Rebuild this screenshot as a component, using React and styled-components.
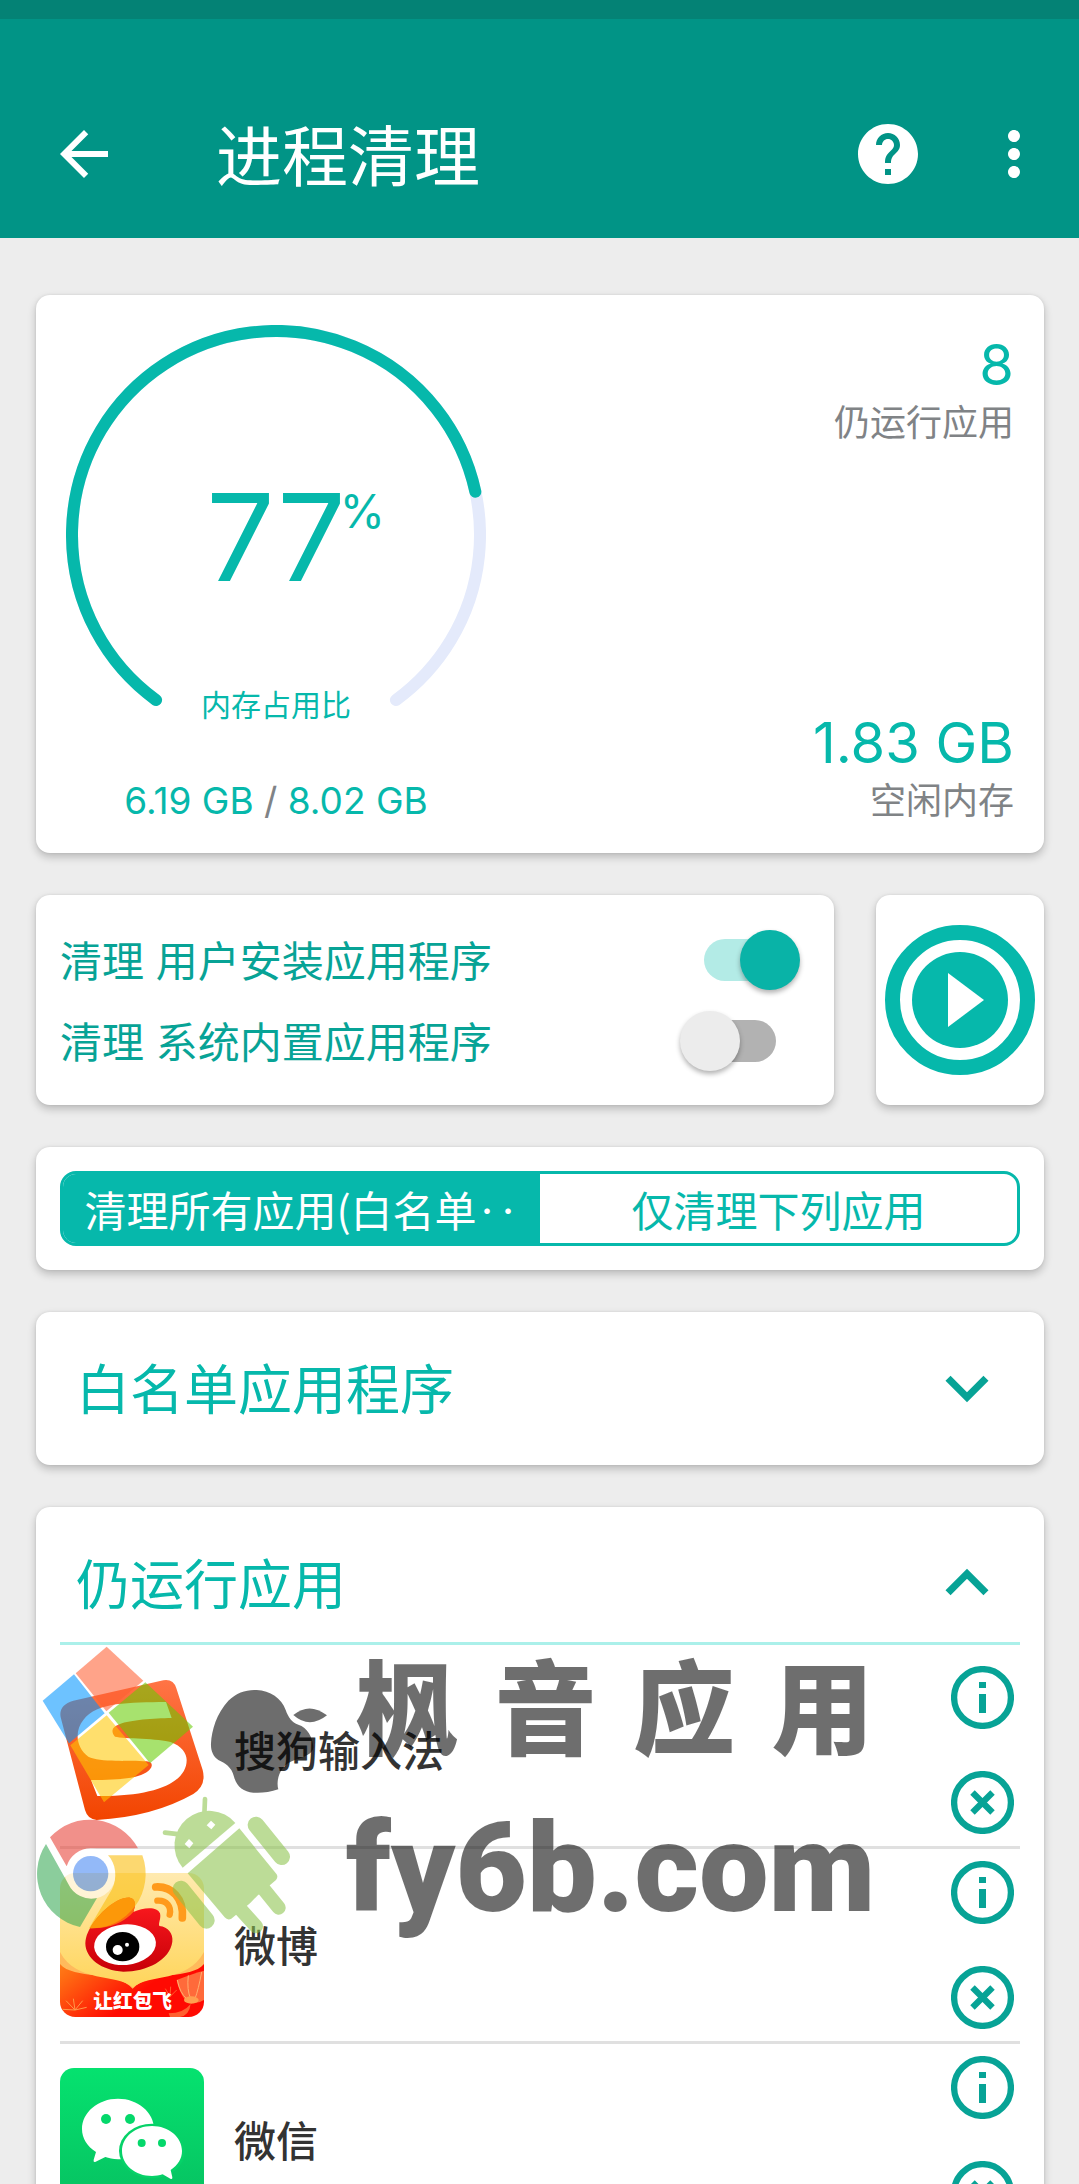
import React, { useState } from "react";
import styled, { createGlobalStyle, css } from "styled-components";
import { MdArrowBack, MdExpandLess, MdExpandMore, MdHelp, MdMoreVert } from "react-icons/md";

const color = {
  bar: "#019486",
  status: "#048275",
  page: "#ededed",
  accent: "#06b8ab",
  deep: "#07a396",
  muted: "#808386",
  line: "#e0e0e0",
};

const GlobalStyle = createGlobalStyle`
  *, *::before, *::after { box-sizing: border-box; }
  body {
    margin: 0;
    background: ${color.page};
    font-family: Inter, "Noto Sans CJK SC", sans-serif;
  }
  button { font: inherit; color: inherit; border: 0; padding: 0; background: none; cursor: pointer; }
  svg { display: block; }
`;

const Shell = styled.div`
  display: flex;
  flex-direction: column;
  height: 100vh;
  overflow: hidden;
`;

const StatusBar = styled.div`
  flex: none;
  height: 19px;
  background: ${color.status};
`;

const AppBar = styled.header`
  flex: none;
  display: flex;
  align-items: center;
  height: 219px;
  padding: 51px 29px 0 48px;
  background: ${color.bar};
  color: #fff;
`;

const BarTitle = styled.h1`
  flex: 1;
  margin: 0 0 0 96px;
  padding-top: 6px;
  font-size: 66px;
  line-height: 72px;
  font-weight: 400;
`;

const IconButton = styled.button`
  display: flex;
  width: 72px;
  height: 72px;
  margin-left: ${(p) => p.$gap || 0}px;
`;

const Scroller = styled.main`
  flex: 1;
  min-height: 0;
  overflow-y: auto;
  scrollbar-width: none;
  padding: 57px 35px 42px 36px;
`;

const Stack = styled.div`
  display: flex;
  flex-direction: column;
  gap: 42px;
`;

const Card = styled.section`
  background: #fff;
  border-radius: 14px;
  box-shadow: 0 4px 9px rgba(0, 0, 0, 0.22), 0 0 3px rgba(0, 0, 0, 0.08);
`;

const MemoryCard = styled(Card)`
  display: flex;
  justify-content: space-between;
  padding: 30px;
`;

const GaugeColumn = styled.div`
  display: flex;
  flex-direction: column;
  gap: 34px;
  align-items: center;
`;

const Gauge = styled.div`
  display: grid;
  width: 420px;
  height: 420px;
  color: ${color.accent};
  > * { grid-area: 1 / 1; }
`;

const GaugeValue = styled.div`
  place-self: center;
  position: relative;
  padding-top: 4px;
  font-size: 121px;
  line-height: 122px;
  font-weight: 400;
`;

const Percent = styled.span`
  position: absolute;
  left: 100%;
  top: 16px;
  margin-left: -6px;
  font-size: 46px;
  line-height: 46px;
`;

const GaugeLabel = styled.div`
  align-self: end;
  justify-self: center;
  padding-bottom: 18px;
  font-size: 30px;
  line-height: 44px;
`;

const MemoryUse = styled.div`
  font-size: 37px;
  line-height: 44px;
  color: ${color.accent};
  span { color: ${color.muted}; }
`;

const StatColumn = styled.div`
  display: flex;
  flex-direction: column;
  justify-content: space-between;
  padding-top: 4px;
  text-align: right;
`;

const StatValue = styled.div`
  font-size: 56px;
  line-height: 72px;
  color: ${color.accent};
`;

const StatLabel = styled.div`
  font-size: 36px;
  line-height: 44px;
  color: ${color.muted};
`;

const SplitRow = styled.div`
  display: flex;
  gap: 42px;
`;

const SwitchCard = styled(Card)`
  flex: 1;
  display: flex;
  flex-direction: column;
  padding: 24px 34px 24px 24px;
`;

const SwitchRow = styled.label`
  display: flex;
  align-items: center;
  justify-content: space-between;
  height: 81px;
  font-size: 42px;
  color: ${color.deep};
  span { padding-bottom: 3px; }
`;

const Switch = styled.input`
  appearance: none;
  position: relative;
  width: 120px;
  height: 60px;
  margin: 0;
  &::before {
    content: "";
    position: absolute;
    inset: 9px 24px;
    border-radius: 21px;
    background: ${(p) => (p.checked ? "#b3ebe6" : "#b2b2b2")};
  }
  &::after {
    content: "";
    position: absolute;
    top: 0;
    left: ${(p) => (p.checked ? "60px" : "0")};
    width: 60px;
    height: 60px;
    border-radius: 50%;
    background: ${(p) => (p.checked ? "#09b3a7" : "#ececec")};
    box-shadow: 0 3px 5px rgba(0, 0, 0, 0.3);
  }
`;

const PlayCard = styled(Card)`
  display: flex;
  align-items: center;
  justify-content: center;
  width: 168px;
`;

const SegmentCard = styled(Card)`
  padding: 24px;
`;

const Segments = styled.div`
  display: flex;
  height: 75px;
  border: 3px solid ${color.accent};
  border-radius: 16px;
  overflow: hidden;
`;

const Segment = styled.button`
  flex: 1 1 0;
  font-family: "Noto Sans CJK SC", sans-serif;
  font-size: 42px;
  line-height: 69px;
  white-space: nowrap;
  color: ${color.accent};
  ${(p) =>
    p.$active &&
    css`
      background: ${color.accent};
      color: #fff;
    `}
`;

const GroupCard = styled(Card)`
  padding: 18px 24px;
`;

const GroupHeader = styled.button`
  display: flex;
  align-items: center;
  justify-content: space-between;
  width: 100%;
  height: 117px;
  padding: 0 10px 2px 16px;
  font-size: 54px;
  color: ${color.accent};
  span { padding-bottom: 3px; }
  svg { width: 86px; height: 86px; color: ${color.deep}; }
`;

const ListBody = styled.div`
  position: relative;
  padding-top: 9px;
  border-top: 3px solid #abf0ea;
`;

const AppList = styled.ul`
  list-style: none;
  margin: 0;
  padding: 0;
`;

const AppRow = styled.li`
  display: flex;
  align-items: center;
  height: 192px;
  padding-right: 6px;
  & + & {
    height: 195px;
    border-top: 3px solid ${color.line};
  }
`;

const AppName = styled.span`
  flex: 1;
  margin-left: 30px;
  padding-bottom: 3px;
  font-size: 42px;
  font-weight: 500;
  color: #333;
`;

const Actions = styled.div`
  display: flex;
  flex-direction: column;
  gap: 42px;
  color: ${color.deep};
  button { display: block; }
`;

const Overlay = styled.div`
  position: absolute;
  top: 1px;
  left: -24px;
  display: flex;
  pointer-events: none;
`;

const OverlayText = styled.div`
  margin-left: 18px;
  color: rgba(0, 0, 0, 0.57);
  font-weight: 900;
`;

const OverlayTitle = styled.div`
  display: flex;
  justify-content: space-between;
  padding: 0 2px 0 10px;
  font-family: "Noto Sans CJK SC", sans-serif;
  font-size: 102px;
  line-height: 114px;
`;

const OverlayUrl = styled.div`
  padding-top: 34px;
  font-family: Roboto, sans-serif;
  font-size: 124px;
  line-height: 150px;
`;

const RADIUS = 204;
const START = 126;
const SWEEP = 288;

function point(deg) {
  const a = (deg * Math.PI) / 180;
  return `${210 + RADIUS * Math.cos(a)} ${210 + RADIUS * Math.sin(a)}`;
}

function arc(from, to) {
  return `M${point(from)}A${RADIUS} ${RADIUS} 0 ${to - from > 180 ? 1 : 0} 1 ${point(to)}`;
}

function GaugeArc({ percent }) {
  return (
    <svg width="420" height="420" viewBox="0 0 420 420" fill="none" strokeWidth="12" strokeLinecap="round">
      <path d={arc(START, START + SWEEP)} stroke="#e4eafb" />
      <path d={arc(START, START + (SWEEP * percent) / 100)} stroke={color.accent} />
    </svg>
  );
}

function PlayIcon() {
  return (
    <svg width="150" height="150" viewBox="-75 -75 150 150">
      <circle r="67.5" fill="none" stroke={color.accent} strokeWidth="15" />
      <circle r="48" fill={color.accent} />
      <path d="M-12-27 24 0-12 27Z" fill="#fff" />
    </svg>
  );
}

function InfoIcon() {
  return (
    <svg width="63" height="63" viewBox="0 0 63 63" fill="currentColor">
      <circle cx="31.5" cy="31.5" r="28.4" fill="none" stroke="currentColor" strokeWidth="6.3" />
      <path d="M28 16h7v6h-7zM28 28h7v19h-7z" />
    </svg>
  );
}

function CloseIcon() {
  return (
    <svg width="63" height="63" viewBox="0 0 63 63" fill="none" stroke="currentColor" strokeWidth="6.3">
      <circle cx="31.5" cy="31.5" r="28.4" />
      <path d="M21.500 21.500l20 20M41.500 21.500l-20 20" />
    </svg>
  );
}

function SogouIcon() {
  return (
    <svg width="144" height="144" viewBox="120 144 432 432">
      <defs>
        <linearGradient id="sogou" x1="0" y1="0" x2="0" y2="1">
          <stop offset="0" stopColor="#ff7446" />
          <stop offset="1" stopColor="#f24400" />
        </linearGradient>
      </defs>
      <path
        fill="url(#sogou)"
        d="M160 212 L430 151 Q460 146 469 175 L548 420 Q560 466 520 492 Q400 560 230 570 Q203 568 195 540 L122 262 Q115 225 160 212Z"
      />
      <path
        fill="#fff"
        d="M438 216 L455 264 C400 265 330 270 300 282 C275 290 272 306 285 320 C310 326 420 325 452 336 C485 348 500 370 500 390 C500 460 400 500 232 498 L213 450 C310 450 375 445 394 412 Q400 396 380 394 C330 390 240 398 205 380 C165 350 165 300 190 270 C230 215 330 218 438 216Z"
      />
    </svg>
  );
}

function WeiboIcon() {
  return (
    <svg width="144" height="144" viewBox="120 729 432 432">
      <defs>
        <clipPath id="weiboClip">
          <rect x="120" y="729" width="432" height="432" rx="46" />
        </clipPath>
        <linearGradient id="weiboRed" x1="0" y1="0" x2="0.7" y2="0.4">
          <stop offset="0" stopColor="#ff8a1c" />
          <stop offset="0.3" stopColor="#ff6a12" />
          <stop offset="1" stopColor="#ff0a02" />
        </linearGradient>
        <linearGradient id="weiboGold" x1="0" y1="0" x2="0" y2="1">
          <stop offset="0" stopColor="#ffeab0" />
          <stop offset="1" stopColor="#ffd55a" />
        </linearGradient>
        <linearGradient id="weiboBody" x1="0" y1="0" x2="0" y2="1">
          <stop offset="0" stopColor="#ff1b20" />
          <stop offset="1" stopColor="#c80008" />
        </linearGradient>
      </defs>
      <g clipPath="url(#weiboClip)">
        <rect x="120" y="960" width="432" height="201" fill="url(#weiboRed)" />
        <path fill="#ffba5c" d="M120 900V1002C160 1050 290 1020 338 1076C390 1020 512 1050 552 1002V900Z" />
        <path fill="url(#weiboGold)" d="M120 729H552V966C500 1060 390 1030 339 1072C290 1030 170 1060 120 966Z" />
        <g fill="none" stroke="#ff9a4a" strokeWidth="3">
          <path d="M165 1140L138 1112M165 1140L160 1106M165 1140L188 1112M165 1140L200 1132M165 1140L128 1138" />
          <path d="M450 1100L436 1076M450 1100L452 1070M450 1100L470 1080" opacity="0.6" />
        </g>
        <path fill="#ff6a3a" d="M470 1050Q520 1030 552 1022V1110Q520 1130 495 1110Q475 1080 470 1050Z" />
        <path fill="none" stroke="#ffb070" strokeWidth="3" d="M472 1050Q480 1090 500 1106M505 1036Q500 1080 512 1106M545 1026Q535 1080 525 1106" />
        <ellipse cx="514" cy="1110" rx="22" ry="11" fill="#ffa050" />
        <path fill="#ff6030" d="M446 1150Q490 1150 512 1122Q508 1156 480 1161H450Z" />
      </g>
      <path
        fill="url(#weiboBody)"
        d="M210 895C235 850 290 800 330 803C350 808 346 828 340 846C370 832 412 828 420 850C424 866 414 880 418 888C445 890 460 912 457 935C450 990 380 1025 310 1025C245 1022 196 985 196 940C197 920 203 908 210 895Z"
      />
      <path fill="#ff6a10" d="M210 895C235 850 290 800 330 803C350 808 346 828 340 846C320 868 290 888 240 894Z" />
      <ellipse cx="315" cy="944" rx="93" ry="61" fill="#fff" transform="rotate(-5 315 944)" />
      <ellipse cx="308" cy="950" rx="50" ry="44" />
      <circle cx="293" cy="960" r="15" fill="#fff" />
      <circle cx="321" cy="944" r="6" fill="#fff" />
      <g fill="none" stroke="#ff9a1c" strokeWidth="23" strokeLinecap="round">
        <path d="M407 771C455 768 492 805 487 864" />
        <path d="M412 812C440 810 455 830 449 854" strokeWidth="19" />
      </g>
      <text
        x="338"
        y="1134"
        textAnchor="middle"
        fontFamily='"Noto Sans CJK SC", sans-serif'
        fontWeight="900"
        fontSize="59"
        fill="#fff"
      >
        让红包飞
      </text>
    </svg>
  );
}

function WechatIcon() {
  return (
    <svg width="144" height="144" viewBox="120 264 432 432">
      <defs>
        <linearGradient id="wechat" x1="0" y1="0" x2="0" y2="1">
          <stop offset="0" stopColor="#05e26f" />
          <stop offset="1" stopColor="#07bf60" />
        </linearGradient>
      </defs>
      <rect x="120" y="264" width="432" height="432" rx="42" fill="url(#wechat)" />
      <path
        fill="#fff"
        d="M294 356C354 356 402 397 402 447C402 497 354 538 294 538C279 538 266 534 256 531L227 545Q219 548 221 539L228 516C202 500 186 475 186 447C186 397 234 356 294 356Z"
      />
      <ellipse cx="396" cy="513" rx="99" ry="82" fill="#06d268" />
      <path
        fill="#fff"
        d="M396 438C446 438 486 471 486 513C486 536 474 555 452 570L457 592Q458 599 451 596L428 583C418 586 407 588 396 588C346 588 306 555 306 513C306 471 346 438 396 438Z"
      />
      <g fill="#05d86b">
        <circle cx="258" cy="417" r="15" />
        <circle cx="330" cy="417" r="15" />
        <circle cx="365" cy="489" r="12" />
        <circle cx="426" cy="489" r="12" />
      </g>
    </svg>
  );
}

function Emblems() {
  return (
    <svg width="292" height="288" viewBox="48 48 876 864" opacity="0.57">
      <path fill="#ff5f31" d="M260 50 370 152 259 244 167 130Z" />
      <path fill="#0095ff" d="M162 133 254 250 147 340 68 212Z" />
      <path fill="#66cd02" d="M376 157 519 290 390 400 266 248Z" />
      <path fill="#ffc800" d="M260 256 386 405 252 517 151 346Z" />
      <path
        fill="#000"
        d="M710 180C750 182 785 205 797 240C805 262 815 278 835 284C862 292 878 322 880 352C880 372 850 382 825 390C790 400 775 430 773 455Q772 470 775 478C750 487 720 490 700 488C670 485 650 470 642 440C635 410 615 400 595 390C578 378 572 360 573 340C575 300 590 250 625 212C650 188 680 178 710 180Z"
      />
      <path fill="#000" d="M820 255Q868 215 921 256Q868 298 820 255Z" />
      <g fill="#8bc34a" stroke="#8bc34a" strokeLinecap="round">
        <path stroke="none" d="M488 713A102 102 0 0 1 646 579Z" />
        <path strokeWidth="14" d="M555 507 553 555M435 608 480 613" />
        <path strokeWidth="50" d="M708 585 785 680M483 777 559 871" />
        <path strokeWidth="42" d="M725 770 776 833M650 825 708 889" />
        <path stroke="none" d="M658 595 770 733Q775 741 768 750L712 797L690 820L634 866Q623 872 614 862L503 730Z" />
        <path stroke="none" fill="#fff" d="M573 572 586 584 574 598 560 586ZM507 627 520 640 508 655 494 642Z" />
      </g>
      <circle cx="212" cy="731" r="76" fill="#fff" />
      <path fill="#e83e32" d="M90 622A163 163 0 0 1 354 655L213 655A76 76 0 0 0 140 709Z" />
      <path fill="#fbbc05" d="M264 676L367 676A163 163 0 0 1 207 895L276 778C293 745 288 700 264 676Z" />
      <path fill="#34a853" d="M78 642L145 762A76 76 0 0 0 231 804L180 891A163 163 0 0 1 78 642Z" />
      <circle cx="212" cy="731" r="53" fill="#4285f4" />
    </svg>
  );
}

const apps = [
  { name: "搜狗输入法", Icon: SogouIcon },
  { name: "微博", Icon: WeiboIcon },
  { name: "微信", Icon: WechatIcon },
];

const modes = ["清理所有应用(白名单‥", "仅清理下列应用"];

export default function App() {
  const [userApps, setUserApps] = useState(true);
  const [systemApps, setSystemApps] = useState(false);
  const [mode, setMode] = useState(0);
  const [open, setOpen] = useState(true);

  return (
    <Shell>
      <GlobalStyle />
      <StatusBar />
      <AppBar>
        <IconButton aria-label="返回"><MdArrowBack size={72} /></IconButton>
        <BarTitle>进程清理</BarTitle>
        <IconButton aria-label="帮助"><MdHelp size={72} /></IconButton>
        <IconButton aria-label="更多" $gap={54}><MdMoreVert size={72} /></IconButton>
      </AppBar>
      <Scroller>
        <Stack>
          <MemoryCard>
            <GaugeColumn>
              <Gauge>
                <GaugeArc percent={77} />
                <GaugeValue>77<Percent>%</Percent></GaugeValue>
                <GaugeLabel>内存占用比</GaugeLabel>
              </Gauge>
              <MemoryUse>6.19 GB <span>/</span> 8.02 GB</MemoryUse>
            </GaugeColumn>
            <StatColumn>
              <div>
                <StatValue>8</StatValue>
                <StatLabel>仍运行应用</StatLabel>
              </div>
              <div>
                <StatValue>1.83 GB</StatValue>
                <StatLabel>空闲内存</StatLabel>
              </div>
            </StatColumn>
          </MemoryCard>

          <SplitRow>
            <SwitchCard>
              <SwitchRow>
                <span>清理 用户安装应用程序</span>
                <Switch type="checkbox" checked={userApps} onChange={(e) => setUserApps(e.target.checked)} />
              </SwitchRow>
              <SwitchRow>
                <span>清理 系统内置应用程序</span>
                <Switch type="checkbox" checked={systemApps} onChange={(e) => setSystemApps(e.target.checked)} />
              </SwitchRow>
            </SwitchCard>
            <PlayCard>
              <button aria-label="开始清理"><PlayIcon /></button>
            </PlayCard>
          </SplitRow>

          <SegmentCard>
            <Segments>
              {modes.map((label, i) => (
                <Segment key={label} $active={mode === i} aria-pressed={mode === i} onClick={() => setMode(i)}>
                  {label}
                </Segment>
              ))}
            </Segments>
          </SegmentCard>

          <GroupCard>
            <GroupHeader aria-expanded="false">
              <span>白名单应用程序</span>
              <MdExpandMore />
            </GroupHeader>
          </GroupCard>

          <GroupCard>
            <GroupHeader aria-expanded={open} onClick={() => setOpen(!open)}>
              <span>仍运行应用</span>
              {open ? <MdExpandLess /> : <MdExpandMore />}
            </GroupHeader>
            {open && (
              <ListBody>
                <AppList>
                  {apps.map(({ name, Icon }) => (
                    <AppRow key={name}>
                      <Icon />
                      <AppName>{name}</AppName>
                      <Actions>
                        <button aria-label={`${name} 信息`}><InfoIcon /></button>
                        <button aria-label={`${name} 关闭`}><CloseIcon /></button>
                      </Actions>
                    </AppRow>
                  ))}
                </AppList>
                <Overlay>
                  <Emblems />
                  <OverlayText>
                    <OverlayTitle>
                      {[..."枫音应用"].map((ch) => <span key={ch}>{ch}</span>)}
                    </OverlayTitle>
                    <OverlayUrl>fy6b.com</OverlayUrl>
                  </OverlayText>
                </Overlay>
              </ListBody>
            )}
          </GroupCard>
        </Stack>
      </Scroller>
    </Shell>
  );
}
